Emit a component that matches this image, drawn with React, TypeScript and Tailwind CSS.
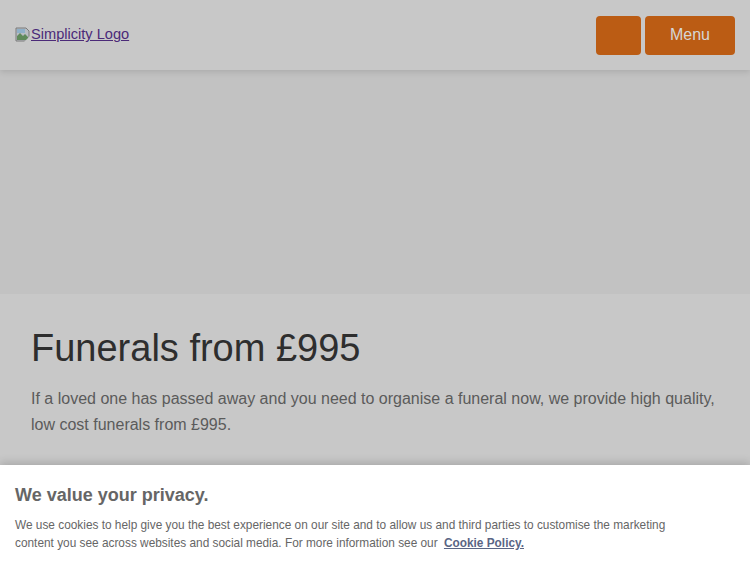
const BrokenImage = () => (
  <svg width="16" height="16" viewBox="0 0 16 16" className="inline-block align-[-2px]">
    <path d="M1 1h10l3 3v10H1z" fill="#b9bdc2" stroke="#7a7a7a" strokeWidth="1" />
    <path d="M2 9l3-3 3 3 2-2 3 3v3H2z" fill="#5f8a5a" />
    <rect x="2" y="2" width="8" height="4" fill="#8fb0c8" />
    <path d="M9 15l6-6v6z" fill="#c8c8c8" />
  </svg>
);

const App = () => {
  return (
    <div className="relative h-[563px] w-[750px] overflow-hidden bg-[#c8c8c8] font-['Liberation_Sans',Arial,sans-serif]">
      <header className="relative z-10 flex h-[70px] items-center justify-between bg-[#c8c8c8] pl-[15px] pr-[15px] shadow-[0_2px_6px_rgba(0,0,0,0.12)]">
        <a href="#" className="flex items-center text-[14.6px] text-[#4b2a78] underline">
          <BrokenImage />
          <span>Simplicity Logo</span>
        </a>
        <div className="flex gap-[4px]">
          <button className="h-[39px] w-[45px] rounded-[4px] bg-[#bb5c14]" />
          <button className="h-[39px] w-[90px] rounded-[4px] bg-[#bb5c14] text-[16px] text-[#d6d6d6]">Menu</button>
        </div>
      </header>

      <div className="h-[224px] bg-[#c2c2c2]" />

      <section className="pl-[31px] pr-[20px] pt-[31px]">
        <h1 className="text-[38px] leading-[46px] text-[#2e2e2e]">Funerals from £995</h1>
        <p className="mt-[15px] text-[16px] leading-[26px] text-[#5b5b5b]">
          If a loved one has passed away and you need to organise a funeral now, we provide high quality,
          <br />
          low cost funerals from £995.
        </p>
      </section>

      <div className="absolute bottom-0 left-0 right-0 z-20 h-[98px] bg-white px-[15px] pt-[19px] shadow-[0_-3px_8px_rgba(0,0,0,0.15)]">
        <h2 className="text-[18px] font-bold leading-[22px] text-[#666]">We value your privacy.</h2>
        <p className="mt-[10px] text-[11.85px] leading-[18px] text-[#666]">
          We use cookies to help give you the best experience on our site and to allow us and third parties to customise the marketing
          <br />
          content you see across websites and social media. For more information see our{' '}
          <a href="#" className="ml-[3px] font-bold text-[#5a6585] underline">Cookie Policy.</a>
        </p>
      </div>
    </div>
  );
};

export default App;
